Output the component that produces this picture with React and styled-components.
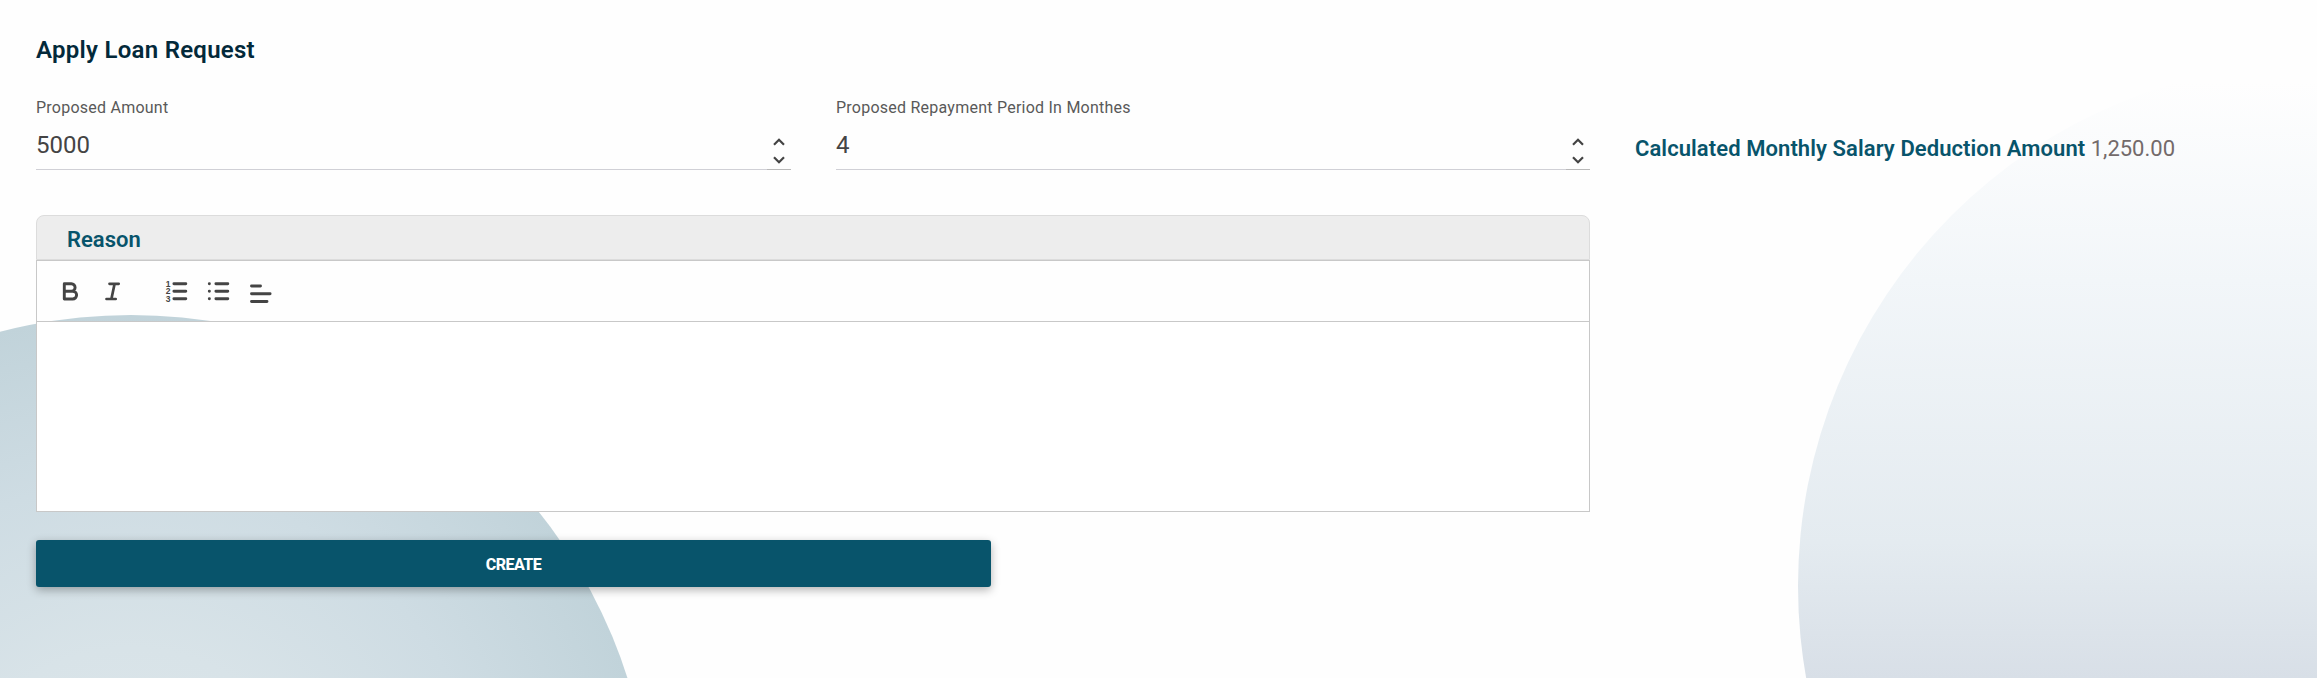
import React, { useState } from 'react';
import styled, { createGlobalStyle } from 'styled-components';

const GlobalStyle = createGlobalStyle`
  * {
    box-sizing: border-box;
  }

  body {
    margin: 0;
    background: #fefefe;
    font-family: Roboto, 'Liberation Sans', sans-serif;
  }
`;

const StyledPage = styled.main`
  position: relative;
  min-height: 678px;
  height: 100vh;
  padding: 32px 36px 0;
  overflow: hidden;
  isolation: isolate;
`;

// decorative circles behind the form
const StyledCircle = styled.div`
  position: absolute;
  z-index: -1;
  left: ${({ $cx, $r }) => $cx - $r}px;
  top: ${({ $cy, $r }) => $cy - $r}px;
  width: ${({ $r }) => $r * 2}px;
  height: ${({ $r }) => $r * 2}px;
  border-radius: 50%;
  background: ${({ $fill }) => $fill};
`;

const StyledTitle = styled.h1`
  margin: 0;
  color: #03293a;
  font-size: 24px;
  font-weight: 600;
  line-height: 36px;
  letter-spacing: 0.27px;
`;

const StyledFields = styled.div`
  display: grid;
  grid-template-columns: 755px 754px 1fr;
  column-gap: 45px;
  margin-top: 27px;
`;

const StyledField = styled.div`
  label {
    display: block;
    color: #595959;
    font-size: 16px;
    line-height: 24px;
    letter-spacing: 0.24px;
    padding-top: 1px;
  }
`;

const StyledNumber = styled.div`
  display: flex;
  height: 50px;

  input {
    flex: 1;
    min-width: 0;
    padding: 0;
    border: 0;
    border-bottom: 1px solid #d0d0d6;
    outline: 0;
    background: none;
    color: #444;
    font-family: inherit;
    font-size: 24px;
  }
`;

const StyledSpinner = styled.div`
  display: flex;
  flex-direction: column;
  align-items: center;
  gap: 10px;
  width: 24px;
  padding-top: 18px;
  border-bottom: 1px solid #b9b9b9;

  button {
    display: block;
    padding: 0;
    border: 0;
    background: none;
    height: 8px;
  }

  svg {
    display: block;
  }
`;

const StyledTotal = styled.p`
  margin: 0;
  padding-top: 40px;
  color: #736a6a;
  font-size: 22px;
  line-height: 28px;
  white-space: nowrap;

  strong {
    color: #08546b;
    font-weight: 600;
    letter-spacing: 0.08px;
  }
`;

const StyledEditor = styled.section`
  width: 1554px;
  margin-top: 45px;
`;

const StyledEditorHeader = styled.h2`
  height: 45px;
  margin: 0;
  padding: 0 30px;
  border: 1px solid #dcdcdc;
  border-radius: 8px 8px 0 0;
  background: #ededed;
  color: #08546b;
  font-size: 22px;
  font-weight: 600;
  line-height: 47px;
`;

const StyledToolbar = styled.div`
  display: flex;
  align-items: center;
  height: 62px;
  border: 1px solid #c8c8c8;
  padding: 0 0 0 21px;

  button {
    display: block;
    width: 24px;
    height: 24px;
    margin-right: 18px;
    padding: 0;
    border: 0;
    background: none;
  }

  .group-end {
    margin-right: 40px;
  }
`;

const StyledEditorBody = styled.div`
  height: 190px;
  border: 1px solid #c8c8c8;
  border-top: 0;
  background: #fff;
  outline: 0;
`;

const StyledSubmit = styled.button`
  display: block;
  width: 955px;
  height: 47px;
  margin-top: 28px;
  padding: 1px 0 0;
  border: 0;
  border-radius: 3px;
  background: #08546b;
  box-shadow: 0 3px 10px rgba(0, 0, 0, 0.3);
  color: #fff;
  font-family: inherit;
  font-size: 16px;
  font-weight: 800;
  letter-spacing: -0.5px;
`;

const Icon = ({ children, width = 2.9 }) => (
  <svg
    width="24"
    height="24"
    viewBox="0 0 24 24"
    fill="none"
    stroke="#444"
    strokeWidth={width}
    strokeLinecap="round"
    strokeLinejoin="round">
    {children}
  </svg>
);

const Chevron = ({ down }) => (
  <svg width="12" height="8" viewBox="0 0 12 8" fill="none" stroke="#444" strokeWidth="2.2">
    <path d={down ? 'M1 1.2l5 5 5-5' : 'M1 6.8l5-5 5 5'} />
  </svg>
);

const NumberField = ({ id, label, initial }) => {
  const [value, setValue] = useState(initial);

  return (
    <StyledField>
      <label htmlFor={id}>{label}</label>
      <StyledNumber>
        <input id={id} value={value} onChange={e => setValue(Number(e.target.value) || 0)} />
        <StyledSpinner>
          <button type="button" onClick={() => setValue(value + 1)}>
            <Chevron />
          </button>
          <button type="button" onClick={() => setValue(value - 1)}>
            <Chevron down />
          </button>
        </StyledSpinner>
      </StyledNumber>
    </StyledField>
  );
};

const App = () => (
  <>
    <GlobalStyle />
    <StyledPage>
      <StyledCircle
        $cx={131}
        $cy={836}
        $r={521}
        $fill="radial-gradient(closest-side, #dee7eb 0%, #d8e3e8 36%, #cedce3 68%, #c1d3da 100%)"
      />
      <StyledCircle
        $cx={2322}
        $cy={586}
        $r={524}
        $fill="linear-gradient(#fefefe 0, #fefefe 20px, #f2f6f9 218px, #e4ebf0 480px, #d8dfe7 616px, #b5c5d2 1048px)"
      />

      <StyledTitle>Apply Loan Request</StyledTitle>

      <StyledFields>
        <NumberField id="amount" label="Proposed Amount" initial={5000} />
        <NumberField id="period" label="Proposed Repayment Period In Monthes" initial={4} />
        <StyledTotal>
          <strong>Calculated Monthly Salary Deduction Amount</strong> 1,250.00
        </StyledTotal>
      </StyledFields>

      <StyledEditor>
        <StyledEditorHeader>Reason</StyledEditorHeader>
        <StyledToolbar>
          <button type="button">
            <Icon>
              <path d="M6.3 4.8h7.1a3.7 3.7 0 0 1 0 7.4h-7.1zM6.3 12.2h8.4a3.9 3.9 0 0 1 0 7.8h-8.4z" />
            </Icon>
          </button>
          <button type="button" className="group-end">
            <Icon width={2.7}>
              <path d="M9.5 4.8h9.2M6.5 20h9.2M14.6 4.8l-3.2 15.2" />
            </Icon>
          </button>
          <button type="button">
            <Icon>
              <path d="M9.9 4.8h11.9M9.9 12.3h11.9M9.9 19.8h11.9" />
              <g fill="#444" stroke="none" fontSize="8.5" fontWeight="900">
                <text x="1.7" y="7.8">1</text>
                <text x="1.7" y="15.3">2</text>
                <text x="1.7" y="22.8">3</text>
              </g>
            </Icon>
          </button>
          <button type="button">
            <Icon>
              <path d="M9.9 4.8h11.9M9.9 12.3h11.9M9.9 19.8h11.9" />
              <path d="M3.3 4.8h.1M3.3 12.3h.1M3.3 19.8h.1" />
            </Icon>
          </button>
          <button type="button">
            <Icon>
              <path d="M3.5 7h9M3.5 14.8h18.6M3.5 22.5h15.5" />
            </Icon>
          </button>
        </StyledToolbar>
        <StyledEditorBody contentEditable suppressContentEditableWarning />
      </StyledEditor>

      <StyledSubmit type="button">CREATE</StyledSubmit>
    </StyledPage>
  </>
);

export default App;
